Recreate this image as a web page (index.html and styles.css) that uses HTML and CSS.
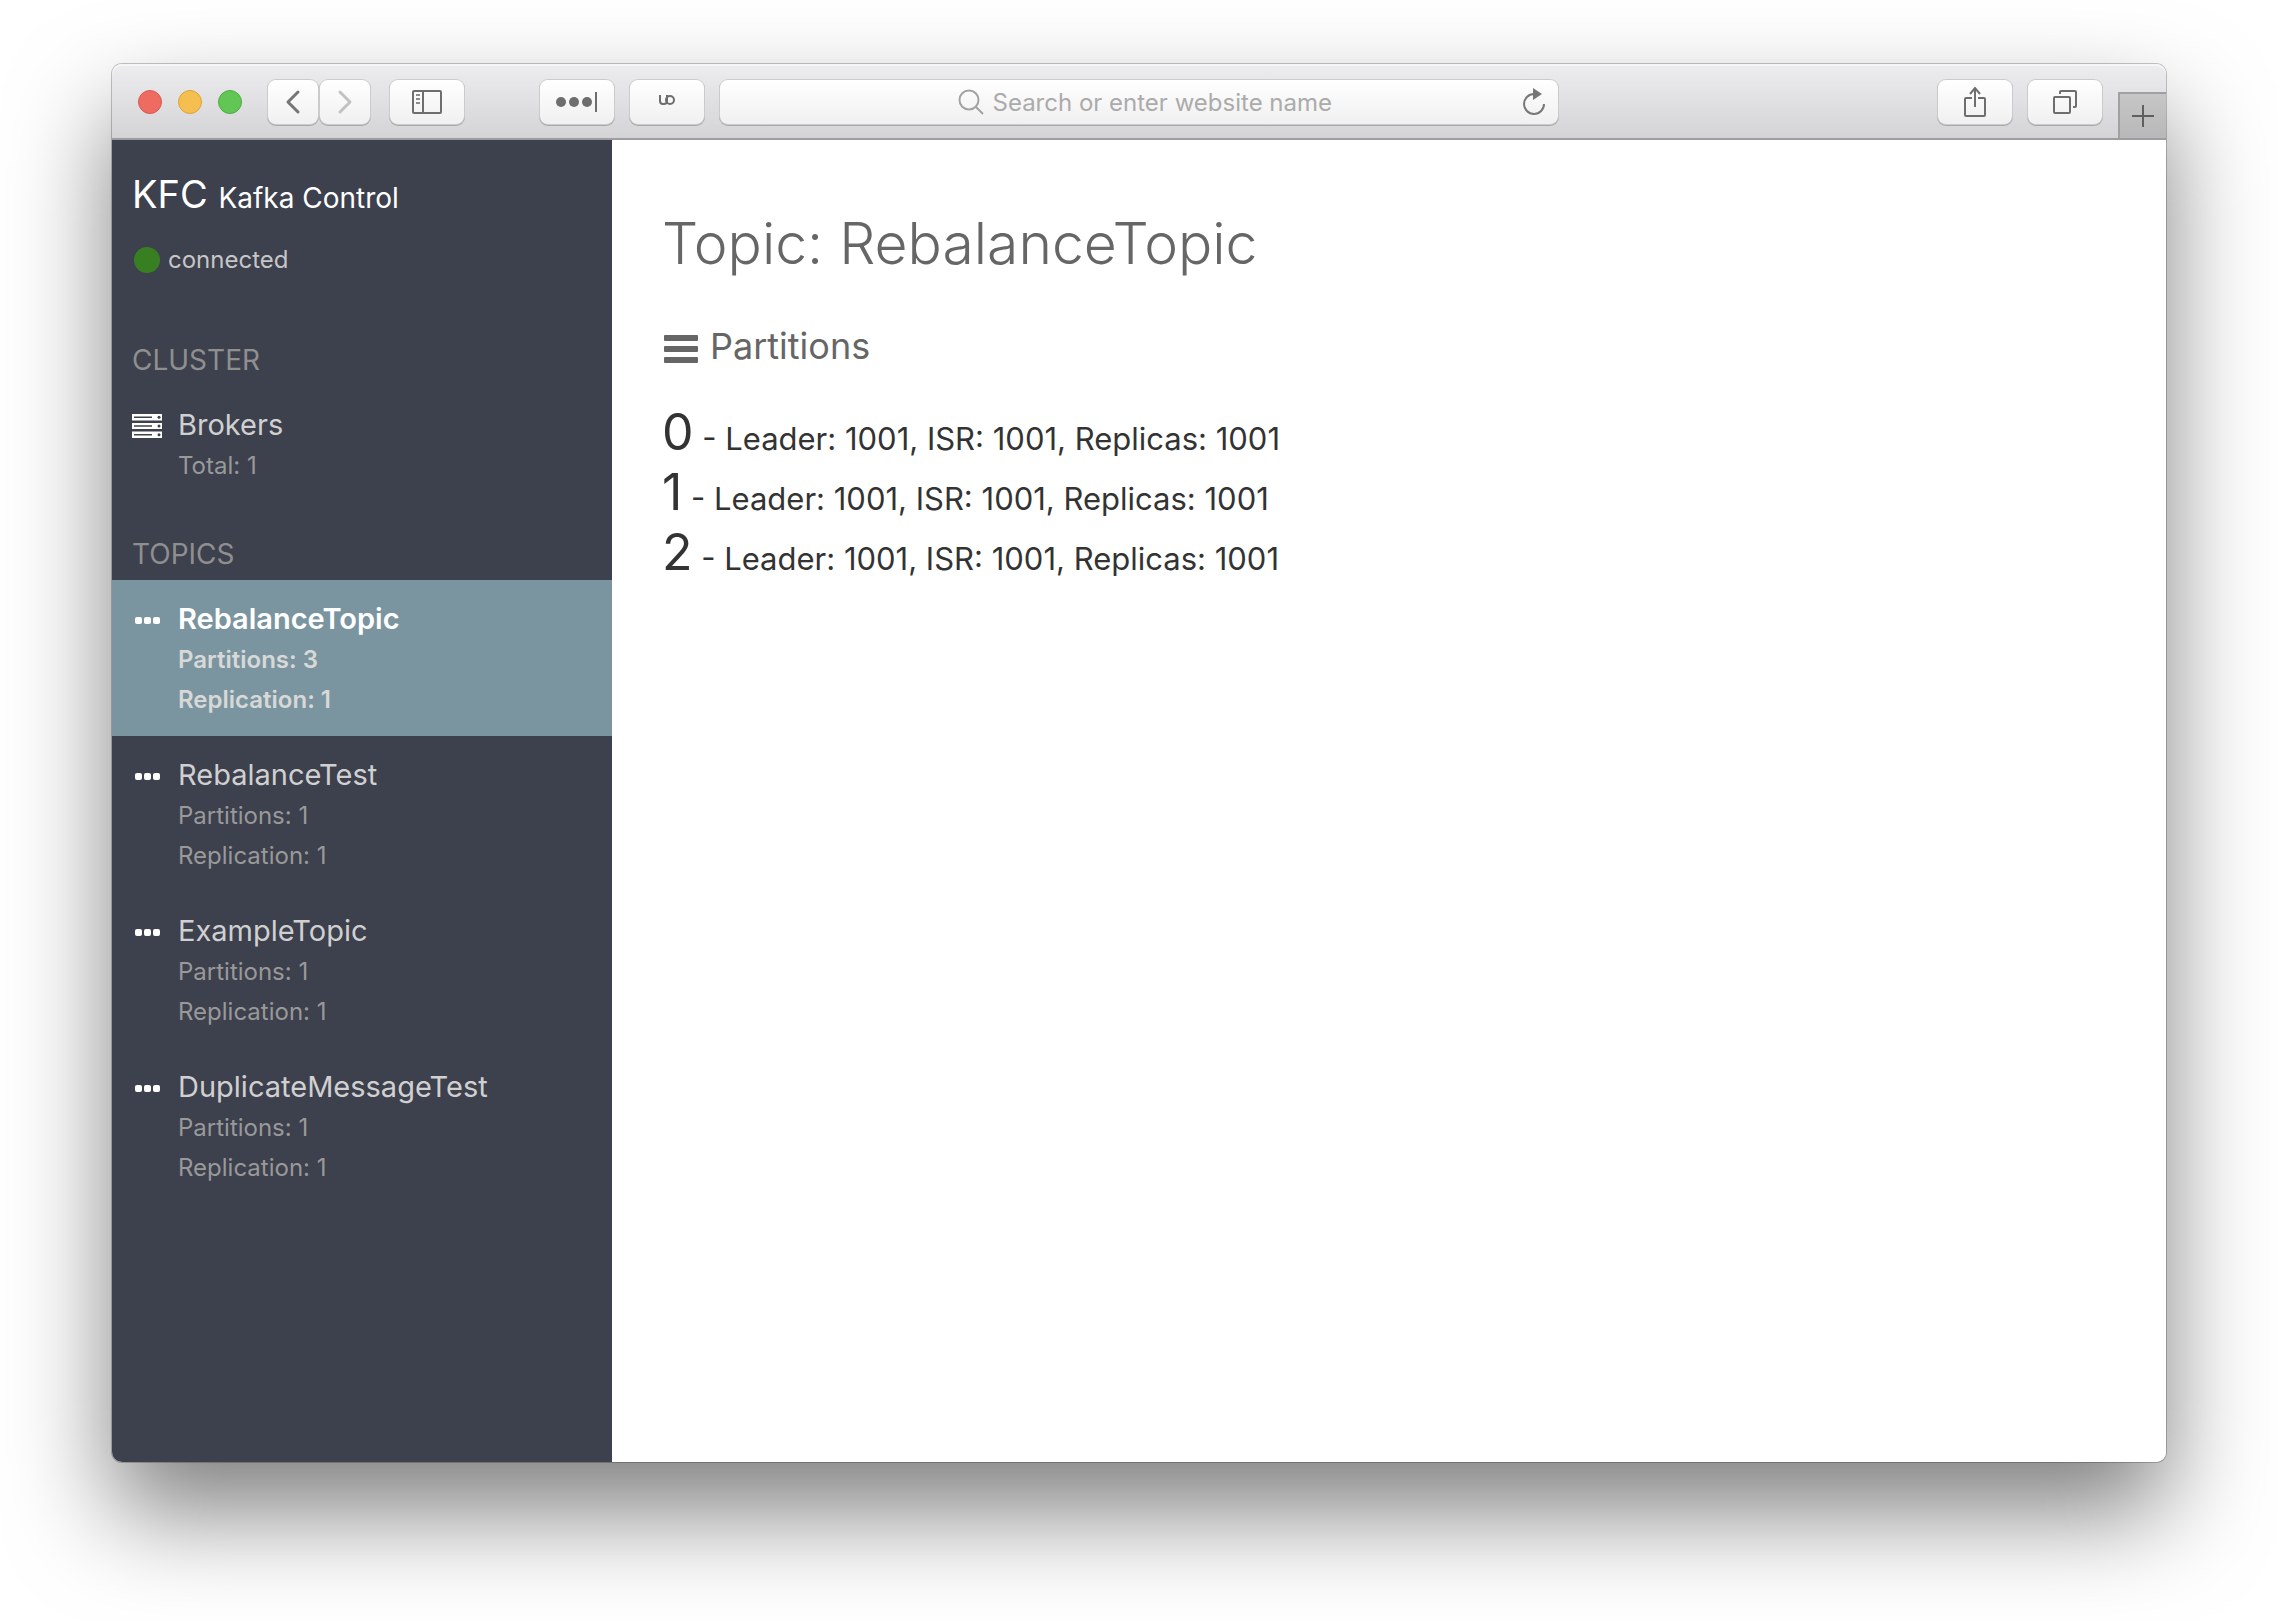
FILE: index.html
```html
<!DOCTYPE html>
<html lang="en">
<head>
<meta charset="utf-8">
<title>KFC Kafka Control</title>
<link rel="stylesheet" href="styles.css">
</head>
<body>
<div class="window">
  <header class="toolbar">
    <div class="tools tools-left">
      <div class="lights">
        <button class="light close" aria-label="Close"></button>
        <button class="light minimize" aria-label="Minimize"></button>
        <button class="light maximize" aria-label="Zoom"></button>
      </div>
      <div class="history">
        <button class="tool narrow" aria-label="Back"><svg width="16" height="26" viewBox="0 0 16 26" fill="none" stroke="#757575" stroke-width="3" stroke-linecap="round" stroke-linejoin="round"><path d="M13 3 3 13l10 10"/></svg></button>
        <button class="tool narrow" aria-label="Forward"><svg width="16" height="26" viewBox="0 0 16 26" fill="none" stroke="#c2c2c2" stroke-width="3" stroke-linecap="round" stroke-linejoin="round"><path d="m3 3 10 10L3 23"/></svg></button>
      </div>
      <button class="tool" aria-label="Show sidebar"><svg width="30" height="24" viewBox="0 0 30 24" fill="none" stroke="#6e6e6e" stroke-width="2"><rect x="1" y="1" width="28" height="22" rx="1"/><path d="M11 1v22"/><path stroke="#8c8c8c" d="M4 5h4M4 9h4M4 13h4"/></svg></button>
      <div class="extensions">
        <button class="tool" aria-label="Passwords"><svg width="44" height="22" viewBox="0 0 44 22" fill="#6e6e6e"><circle cx="6" cy="11" r="5"/><circle cx="19" cy="11" r="5"/><circle cx="32" cy="11" r="5"/><path d="M40 1h2v20h-2z"/></svg></button>
        <button class="tool" aria-label="Content blocker"><svg class="raised" width="16" height="12" viewBox="0 0 16 12" fill="none" stroke="#6e6e6e" stroke-width="2"><path d="M1 1v6q0 3 3 3h1q3 0 3-3V1"/><circle cx="11" cy="6" r="4"/></svg></button>
      </div>
    </div>
    <div class="address">
      <label class="search">
        <svg width="27" height="26" viewBox="0 0 27 26" fill="none" stroke="#a2a2a2" stroke-width="2"><circle cx="11" cy="11" r="9.500"/><path d="m18 18 7 7"/></svg>
        <input class="url" type="text" placeholder="Search or enter website name" aria-label="Address">
      </label>
      <button class="reload" aria-label="Reload"><svg width="24" height="28" viewBox="0 0 24 28" fill="none"><path d="M12 6a10 10 0 1 0 10 10" stroke="#777" stroke-width="2"/><path d="m11 0 9 6-9 6z" fill="#777"/></svg></button>
    </div>
    <div class="tools tools-right">
      <button class="tool" aria-label="Share"><svg width="22" height="30" viewBox="0 0 22 30" fill="none" stroke="#6e6e6e" stroke-width="2"><path d="M8 11H2q-1 0-1 1v16q0 1 1 1h18q1 0 1-1V12q0-1-1-1h-6M11 20V1M6 7l5-6 5 6"/></svg></button>
      <button class="tool" aria-label="Show all tabs"><svg width="24" height="24" viewBox="0 0 24 24" fill="none" stroke="#6e6e6e" stroke-width="2"><rect x="1" y="7" width="16" height="16" rx="1"/><path d="M7 4V2q0-1 1-1h14q1 0 1 1v14q0 1-1 1h-2"/></svg></button>
      <button class="new-tab" aria-label="New tab"><svg width="22" height="22" viewBox="0 0 22 22" stroke="#5f5f5f" stroke-width="2"><path d="M11 0v22M0 11h22"/></svg></button>
    </div>
  </header>
  <div class="app">
    <aside class="sidebar">
      <h1 class="brand">KFC <small class="brand-sub">Kafka Control</small></h1>
      <p class="status"><span class="status-dot"></span>connected</p>
      <nav class="nav">
        <h2 class="nav-title">CLUSTER</h2>
        <a class="item" href="#brokers">
          <svg class="item-icon" width="30" height="24" viewBox="0 0 30 24" fill="#fff"><path fill-rule="evenodd" d="M0 0h30v6.500H0zM2 2.500v1.500h18V2.500zM0 9h30v6H0zM2 11.300v1.500h18v-1.500zM0 17.500h30V24H0zM2 20v1.500h18V20z"/><g fill="#3d404d"><circle cx="27" cy="3.300" r="1.500"/><circle cx="27" cy="12" r="1.500"/><circle cx="27" cy="20.700" r="1.500"/></g></svg>
          <span class="item-text"><span class="item-name">Brokers</span><span class="item-meta">Total: 1</span></span>
        </a>
        <h2 class="nav-title">TOPICS</h2>
        <a class="item active" href="#rebalance-topic" aria-current="page">
          <svg class="item-icon" width="30" height="24" viewBox="0 0 30 24" fill="#fff"><rect x="3" y="9" width="7" height="7" rx="2"/><rect x="12" y="9" width="7" height="7" rx="2"/><rect x="21" y="9" width="7" height="7" rx="2"/></svg>
          <span class="item-text"><span class="item-name">RebalanceTopic</span><span class="item-meta">Partitions: 3</span><span class="item-meta">Replication: 1</span></span>
        </a>
        <a class="item" href="#rebalance-test">
          <svg class="item-icon" width="30" height="24" viewBox="0 0 30 24" fill="#fff"><rect x="3" y="9" width="7" height="7" rx="2"/><rect x="12" y="9" width="7" height="7" rx="2"/><rect x="21" y="9" width="7" height="7" rx="2"/></svg>
          <span class="item-text"><span class="item-name">RebalanceTest</span><span class="item-meta">Partitions: 1</span><span class="item-meta">Replication: 1</span></span>
        </a>
        <a class="item" href="#example-topic">
          <svg class="item-icon" width="30" height="24" viewBox="0 0 30 24" fill="#fff"><rect x="3" y="9" width="7" height="7" rx="2"/><rect x="12" y="9" width="7" height="7" rx="2"/><rect x="21" y="9" width="7" height="7" rx="2"/></svg>
          <span class="item-text"><span class="item-name">ExampleTopic</span><span class="item-meta">Partitions: 1</span><span class="item-meta">Replication: 1</span></span>
        </a>
        <a class="item" href="#duplicate-message-test">
          <svg class="item-icon" width="30" height="24" viewBox="0 0 30 24" fill="#fff"><rect x="3" y="9" width="7" height="7" rx="2"/><rect x="12" y="9" width="7" height="7" rx="2"/><rect x="21" y="9" width="7" height="7" rx="2"/></svg>
          <span class="item-text"><span class="item-name">DuplicateMessageTest</span><span class="item-meta">Partitions: 1</span><span class="item-meta">Replication: 1</span></span>
        </a>
      </nav>
    </aside>
    <main class="content">
      <h2 class="title">Topic: RebalanceTopic</h2>
      <h3 class="subtitle"><svg class="subtitle-icon" width="34" height="28" viewBox="0 0 34 28" fill="#666"><rect y="0" width="34" height="6" rx="1"/><rect y="11" width="34" height="6" rx="1"/><rect y="22" width="34" height="6" rx="1"/></svg>Partitions</h3>
      <ul class="partitions">
        <li class="partition">0<span class="detail"> - Leader: 1001, ISR: 1001, Replicas: 1001</span></li>
        <li class="partition">1<span class="detail"> - Leader: 1001, ISR: 1001, Replicas: 1001</span></li>
        <li class="partition">2<span class="detail"> - Leader: 1001, ISR: 1001, Replicas: 1001</span></li>
      </ul>
    </main>
  </div>
</div>
</body>
</html>
```
FILE: styles.css
```css
* { box-sizing: border-box; }

body {
  margin: 0;
  min-height: 100vh;
  padding: 64px 112px 160px;
  display: flex;
  background: #fff;
  color: #333;
  font-family: Inter, "Liberation Sans", sans-serif;
}

h1, h2, h3, p, ul { margin: 0; padding: 0; font-weight: 400; }
ul { list-style: none; }
a { color: inherit; text-decoration: none; }
button { padding: 0; border: 0; background: none; font: inherit; }
svg { display: block; flex: none; }

.window {
  flex: 1;
  display: flex;
  flex-direction: column;
  border-radius: 10px;
  box-shadow: 0 0 0 1px rgba(0, 0, 0, .22), 0 50px 100px rgba(0, 0, 0, .5);
}

/* Browser toolbar */
.toolbar {
  display: grid;
  grid-template-columns: 1fr 41% 1fr;
  height: 76px;
  border-bottom: 2px solid #9d9da1;
  border-radius: 10px 10px 0 0;
  background: linear-gradient(#ededef, #d4d4d6);
  box-shadow: inset 0 2px 0 #f6f6f6;
  overflow: hidden;
}
.tools { display: flex; padding-top: 16px; }
.tools-left { padding-left: 26px; padding-right: 14px; }
.tools-right { justify-content: flex-end; gap: 16px; }

.lights { display: flex; gap: 16px; padding-top: 10px; margin-right: 26px; }
.light { width: 24px; height: 24px; border: 1px solid; border-radius: 50%; }
.close { background: #ed6b60; border-color: #d85a50; }
.minimize { background: #f5bf50; border-color: #dba43c; }
.maximize { background: #62c655; border-color: #4fac43; }

.history { display: flex; gap: 2px; margin-right: 20px; }
.extensions { display: flex; gap: 16px; margin-left: auto; }

.tool {
  display: flex;
  align-items: center;
  justify-content: center;
  width: 74px;
  height: 44px;
  border-radius: 8px;
  background: linear-gradient(#fff, #f0f0f0);
  box-shadow: 0 0 0 1px #cbcbcd, 0 1px 0 1px #a9a9ab;
}
.narrow { width: 50px; }
.raised { margin-bottom: 4px; }

.address {
  display: flex;
  align-items: center;
  height: 44px;
  margin: 16px 2px 0;
  padding-right: 12px;
  border-radius: 8px;
  background: linear-gradient(#fff, #f0f0f0);
  box-shadow: 0 0 0 1px #cbcbcd, 0 1px 0 1px #a9a9ab;
}
.search { flex: 1; display: flex; align-items: center; justify-content: center; gap: 8px; padding-left: 52px; }
.url {
  width: 344px;
  padding: 2px 0 0;
  border: 0;
  outline: 0;
  background: none;
  font: 24px/32px Inter, "Liberation Sans", sans-serif;
}
.url::placeholder { color: #ababab; opacity: 1; }

.new-tab {
  display: flex;
  align-items: center;
  justify-content: center;
  width: 48px;
  margin-top: 12px;
  border: solid #a0a0a2;
  border-width: 2px 0 0 2px;
  background: linear-gradient(#c6c6c7, #b8b8b9);
}

/* Application */
.app { flex: 1; display: flex; border-radius: 0 0 10px 10px; overflow: hidden; }

.sidebar { width: 500px; flex: none; background: #3d404d; }
.brand { padding: 28px 20px 0; color: #fff; font-size: 38px; line-height: 52px; }
.brand-sub { font-size: 28px; line-height: 1; }
.status {
  display: flex;
  align-items: center;
  gap: 8px;
  padding: 20px 22px 0;
  color: #c6c6c6;
  font-size: 24px;
  line-height: 40px;
}
.status-dot { width: 26px; height: 26px; border-radius: 50%; background: #387f21; }

.nav { padding-top: 28px; }
.nav-title { padding: 32px 20px 6px; color: #8f8f8f; font-size: 28px; line-height: 40px; }

.item { display: flex; gap: 16px; padding: 18px 20px 16px; color: #d0d0d0; }
.item-icon { margin-top: 10px; }
.item-text { display: flex; flex-direction: column; }
.item-name { font-size: 29px; line-height: 42px; }
.item-meta { color: #999; font-size: 24px; line-height: 40px; }
.active { background: #7a959f; color: #fff; font-weight: 600; }
.active .item-meta { color: #d8d8d8; }

.content { flex: 1; padding: 64px 50px; background: #fff; }
.title { color: #666; font-size: 57px; font-weight: 300; line-height: 80px; }
.subtitle {
  display: flex;
  align-items: center;
  gap: 12px;
  padding: 38px 2px 0;
  color: #666;
  font-size: 36px;
  line-height: 48px;
}
.subtitle-icon { margin-top: 6px; }
.partitions { padding-top: 32px; }
.partition { font-size: 50px; line-height: 60px; }
.detail { font-size: 31px; line-height: 1; }
```
